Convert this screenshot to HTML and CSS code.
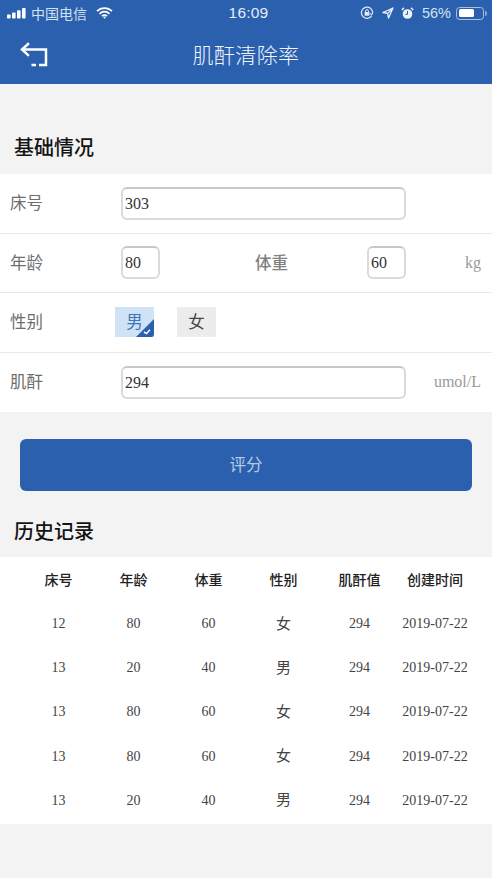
FILE: index.html
```html
<!DOCTYPE html>
<html lang="zh">
<head>
<meta charset="utf-8">
<title>肌酐清除率</title>
<link rel="stylesheet" href="styles.css">
</head>
<body>
<header class="head">
  <div class="status">
    <div class="st-left">
      <svg class="sig" width="19" height="11" viewBox="0 0 19 11"><rect x="0" y="6.500" width="3.600" height="4" rx=".8"/><rect x="5" y="4.500" width="3.600" height="6" rx=".8"/><rect x="10" y="2.200" width="3.600" height="8.300" rx=".8"/><rect x="15" y="0" width="3.600" height="10.500" rx=".8"/></svg>
      <span class="carrier">中国电信</span>
      <svg class="wifi" width="17" height="12" viewBox="0 0 17 12"><path d="M1 4.200a10.600 10.600 0 0 1 15 0M3.500 6.800a7 7 0 0 1 10 0M6 9.200a3.400 3.400 0 0 1 5 0" fill="none" stroke="#fff" stroke-width="1.700"/><path d="M7.200 10.200a1.800 1.800 0 0 1 2.600 0L8.500 11.700z" fill="#fff"/></svg>
    </div>
    <div class="st-time">16:09</div>
    <div class="st-right">
      <svg width="14" height="14" viewBox="0 0 14 14"><path d="M11.800 9.600A5.600 5.600 0 1 1 12.600 7c0 1.600-2.200 1.800-2.200.3" fill="none" stroke="#dfe8f5" stroke-width="1.200"/><rect x="4.600" y="6" width="4.800" height="3.800" rx=".6" fill="#dfe8f5"/><path d="M5.600 6V5a1.400 1.400 0 0 1 2.800 0v1" fill="none" stroke="#dfe8f5"/></svg>
      <svg width="12" height="12" viewBox="0 0 12 12"><path d="M11 1 1 5.500l4.600.9L6.500 11zM5.600 6.400 11 1" fill="none" stroke="#eef3fa" stroke-width="1.300" stroke-linejoin="round"/></svg>
      <svg width="13" height="13" viewBox="0 0 13 13"><circle cx="6.500" cy="7" r="4.800" fill="#eef3fa"/><path d="M6.500 4v3.300H4.300" fill="none" stroke="#2a62b2"/><path d="M.8 3 3 .9M12.200 3 10 .9" stroke="#eef3fa" stroke-width="1.500"/></svg>
      <span class="pct">56%</span>
      <span class="batt"><span class="batt-fill"></span></span><span class="batt-tip"></span>
    </div>
  </div>
  <div class="nav">
    <svg class="back" width="28" height="25" viewBox="0 0 28 25"><path d="M8 2 2 7.500 8 13" fill="none" stroke="#fff" stroke-width="2.500" stroke-linecap="square"/><path d="M3 7.500H26V23H19" fill="none" stroke="#fff" stroke-width="2.500"/><path d="M11.500 23h4.500" stroke="#fff" stroke-width="2.500" fill="none"/></svg>
    <h1 class="title">肌酐清除率</h1>
  </div>
</header>

<main>
  <h2 class="sec first">基础情况</h2>
  <section class="form">
    <div class="row">
      <span class="lab">床号</span>
      <div class="inp wide">303</div>
    </div>
    <div class="row">
      <span class="lab">年龄</span>
      <div class="inp small">80</div>
      <span class="lab lab2">体重</span>
      <div class="inp small">60</div>
      <span class="unit">kg</span>
    </div>
    <div class="row">
      <span class="lab">性别</span>
      <div class="opts">
        <span class="opt on">男<svg class="tick" width="18" height="18" viewBox="0 0 18 18"><path d="M18 0V15a3 3 0 0 1-3 3H0z" fill="#2a60ae"/><path d="M8 13l2.500 1.600 3.500-3.800" fill="none" stroke="#fff" stroke-width="1.500"/></svg></span>
        <span class="opt">女</span>
      </div>
    </div>
    <div class="row last">
      <span class="lab">肌酐</span>
      <div class="inp wide">294</div>
      <span class="unit">umol/L</span>
    </div>
  </section>

  <button class="submit" type="button">评分</button>

  <h2 class="sec hist">历史记录</h2>
  <section class="table">
    <div class="tr th"><span>床号</span><span>年龄</span><span>体重</span><span>性别</span><span>肌酐值</span><span>创建时间</span></div>
    <div class="tr"><span>12</span><span>80</span><span>60</span><span class="cj">女</span><span>294</span><span>2019-07-22</span></div>
    <div class="tr"><span>13</span><span>20</span><span>40</span><span class="cj">男</span><span>294</span><span>2019-07-22</span></div>
    <div class="tr"><span>13</span><span>80</span><span>60</span><span class="cj">女</span><span>294</span><span>2019-07-22</span></div>
    <div class="tr"><span>13</span><span>80</span><span>60</span><span class="cj">女</span><span>294</span><span>2019-07-22</span></div>
    <div class="tr"><span>13</span><span>20</span><span>40</span><span class="cj">男</span><span>294</span><span>2019-07-22</span></div>
  </section>
</main>
</body>
</html>
```

FILE: styles.css
```css
* { box-sizing: border-box; }
html, body { margin: 0; padding: 0; }
body {
  width: 492px;
  height: 878px;
  overflow: hidden;
  background: #f3f3f3;
  font-family: "Liberation Serif", "Noto Sans CJK SC", serif;
}
.head {
  height: 84px;
  background: #2a60ae;
  color: #fff;
  font-family: "Liberation Sans", "Noto Sans CJK SC", sans-serif;
}
.status {
  height: 26px;
  display: grid;
  grid-template-columns: 1fr auto 1fr;
  align-items: center;
  padding: 0 5px 0 7px;
  font-size: 14px;
  color: #e6edf7;
}
.st-left { display: flex; align-items: center; }
.sig { fill: #fff; margin-right: 5px; }
.carrier { font-size: 14px; color: #d5e0f0; }
.wifi { margin-left: 9px; }
.st-time { font-size: 15.500px; font-weight: 500; letter-spacing: .2px; margin-left: 3px; }
.st-right { display: flex; justify-content: flex-end; align-items: center; gap: 7.500px; }
.pct { font-size: 14.500px; color: #d5e0f0; margin-right: -2.500px; }
.batt {
  width: 28px;
  height: 13px;
  border: 1px solid #aebfdc;
  border-radius: 3.500px;
  padding: 1.500px;
  margin-right: -6.500px;
  display: block;
}
.batt-fill { display: block; width: 15px; height: 100%; background: #fff; border-radius: 1.500px; }
.batt-tip { width: 2px; height: 5px; background: #8fa8d0; border-radius: 0 2px 2px 0; }
.nav {
  height: 58px;
  position: relative;
  display: flex;
  align-items: center;
  justify-content: center;
  padding-bottom: 3px;
}
.back { position: absolute; left: 20px; top: 16px; }
.title { margin: 0; font-size: 21px; font-weight: 300; letter-spacing: .4px; color: #f2f5fa; }
.sec {
  margin: 0;
  font-family: "Noto Sans CJK SC", sans-serif;
  font-size: 20px;
  font-weight: 500;
  line-height: 30px;
  color: #141414;
  padding-left: 14px;
}
.first { padding-top: 48px; height: 90px; }
.form { background: #fff; }
.row {
  height: 59.500px;
  display: flex;
  align-items: center;
  padding: 0 11px 0 10px;
  border-bottom: 1px solid #eaeaea;
  position: relative;
}
.row.last { height: 59px; border-bottom: none; }
.lab {
  width: 111px;
  flex: none;
  padding-bottom: 2px;
  font-family: "Noto Sans CJK SC", sans-serif;
  font-size: 16.500px;
  color: #6e6e6e;
}
.lab2 { width: 112px; margin-left: 95px; font-weight: 500; color: #808080; }
.inp {
  height: 33px;
  background: #fff;
  border: 2px solid #dadada;
  border-top-color: #c8c8c8;
  border-radius: 6px;
  font-size: 16px;
  line-height: 29px;
  padding-left: 2px;
  color: #333;
}
.wide { width: 285px; }
.small { width: 39px; }
.unit {
  position: absolute;
  right: 11px;
  top: 50%;
  transform: translateY(-50%);
  font-size: 16px;
  color: #9a9a9a;
}
.opts { display: flex; gap: 23px; margin-left: -6px; }
.opt {
  width: 39px;
  height: 30px;
  position: relative;
  background: #ececec;
  font-family: "Noto Sans CJK SC", sans-serif;
  font-size: 16.500px;
  line-height: 29px;
  text-align: center;
  color: #444;
}
.opt.on { background: #cfe2f6; color: #3f74b8; }
.tick { position: absolute; right: 0; bottom: 0; }
.submit {
  display: block;
  width: 452px;
  height: 52.500px;
  margin: 27px 0 0 20px;
  padding: 0 0 1px;
  border: none;
  border-radius: 6px;
  background: #2a60ae;
  color: #b9c9e3;
  font-family: "Noto Sans CJK SC", sans-serif;
  font-size: 16.500px;
}
.hist { padding-top: 25px; height: 66px; }
.table { background: #fff; height: 267px; }
.tr {
  height: 44.200px;
  display: grid;
  grid-template-columns: 21px 75px 75px 75px 75px 77px 74px;
  align-items: center;
  font-size: 14px;
  color: #444;
}
.tr::before { content: ""; }
.tr span { text-align: center; white-space: nowrap; }
.th {
  height: 45px;
  padding-bottom: 2px;
  font-family: "Noto Sans CJK SC", sans-serif;
  font-weight: 500;
  color: #222;
}
.cj { font-family: "Noto Sans CJK SC", sans-serif; font-size: 15px; padding-bottom: 4px; }
```
